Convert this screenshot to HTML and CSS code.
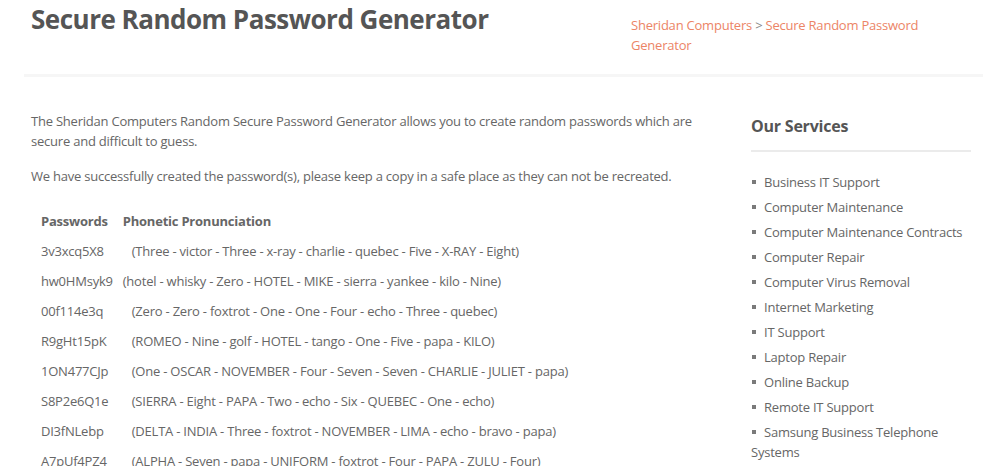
FILE: index.html
```html
<!DOCTYPE html>
<html lang="en">
<head>
<meta charset="utf-8">
<title>Secure Random Password Generator</title>
<link rel="stylesheet" href="styles.css">
</head>
<body>
<header class="page-head">
  <div class="title-wrap">
    <h1 class="page-title">Secure Random Password Generator</h1>
  </div>
  <nav class="crumbs">
    <a href="#" class="crumb">Sheridan Computers</a> <span class="sep">&gt;</span> <a href="#" class="crumb">Secure Random Password Generator</a>
  </nav>
</header>
<div class="main">
  <section class="content">
    <p>The Sheridan Computers Random Secure Password Generator allows you to create random passwords which are secure and difficult to guess.</p>
    <p>We have successfully created the password(s), please keep a copy in a safe place as they can not be recreated.</p>
    <table class="pw-table">
      <tr><th>Passwords</th><th>Phonetic Pronunciation</th></tr>
      <tr><td>3v3xcq5X8</td><td class="ph wide">(Three - victor - Three - x-ray - charlie - quebec - Five - X-RAY - Eight)</td></tr>
      <tr><td>hw0HMsyk9</td><td class="ph">(hotel - whisky - Zero - HOTEL - MIKE - sierra - yankee - kilo - Nine)</td></tr>
      <tr><td>00f114e3q</td><td class="ph wide">(Zero - Zero - foxtrot - One - One - Four - echo - Three - quebec)</td></tr>
      <tr><td>R9gHt15pK</td><td class="ph wide">(ROMEO - Nine - golf - HOTEL - tango - One - Five - papa - KILO)</td></tr>
      <tr><td>1ON477CJp</td><td class="ph wide">(One - OSCAR - NOVEMBER - Four - Seven - Seven - CHARLIE - JULIET - papa)</td></tr>
      <tr><td>S8P2e6Q1e</td><td class="ph wide">(SIERRA - Eight - PAPA - Two - echo - Six - QUEBEC - One - echo)</td></tr>
      <tr><td>DI3fNLebp</td><td class="ph wide">(DELTA - INDIA - Three - foxtrot - NOVEMBER - LIMA - echo - bravo - papa)</td></tr>
      <tr><td>A7pUf4PZ4</td><td class="ph wide">(ALPHA - Seven - papa - UNIFORM - foxtrot - Four - PAPA - ZULU - Four)</td></tr>
    </table>
  </section>
  <aside class="sidebar">
    <h3 class="side-title">Our Services</h3>
    <ul class="services">
      <li><span class="bullet"></span>Business IT Support</li>
      <li><span class="bullet"></span>Computer Maintenance</li>
      <li><span class="bullet"></span>Computer Maintenance Contracts</li>
      <li><span class="bullet"></span>Computer Repair</li>
      <li><span class="bullet"></span>Computer Virus Removal</li>
      <li><span class="bullet"></span>Internet Marketing</li>
      <li><span class="bullet"></span>IT Support</li>
      <li><span class="bullet"></span>Laptop Repair</li>
      <li><span class="bullet"></span>Online Backup</li>
      <li><span class="bullet"></span>Remote IT Support</li>
      <li><span class="bullet"></span>Samsung Business Telephone Systems</li>
    </ul>
  </aside>
</div>
</body>
</html>
```

FILE: styles.css
```css
html, body {
  margin: 0;
  padding: 0;
  background: #fff;
}
body {
  font-family: "Open Sans", "Liberation Sans", sans-serif;
  font-size: 13px;
  line-height: 20px;
  letter-spacing: -0.017em;
  color: #666;
}
.page-head {
  display: flex;
  align-items: flex-start;
  margin: 0 18px 0 24px;
  padding: 2px 0 19px 7px;
  border-bottom: 3px solid #f6f6f6;
}
.title-wrap {
  flex: 0 0 600px;
}
.page-title {
  margin: 0;
  font-size: 26px;
  line-height: 35px;
  font-weight: 700;
  letter-spacing: -0.5px;
  color: #555;
}
.crumbs {
  width: 300px;
  margin-top: 13px;
  color: #888;
}
.crumb {
  color: #ec8466;
  text-decoration: none;
}
.main {
  display: flex;
  align-items: flex-start;
  padding-left: 31px;
}
.content {
  flex: 0 0 670px;
  padding-top: 34px;
}
.content p {
  margin: 0 0 15px;
}
.pw-table {
  border-collapse: collapse;
  margin-top: 20px;
}
.pw-table th,
.pw-table td {
  padding: 5px 0 5px 10px;
  text-align: left;
  white-space: nowrap;
}
.pw-table th {
  font-weight: 700;
  color: #666;
}
.pw-table td.wide {
  padding-left: 19px;
}
.sidebar {
  margin-left: 50px;
  width: 220px;
  padding-top: 38px;
}
.side-title {
  margin: 0;
  font-size: 16px;
  line-height: 22px;
  font-weight: 700;
  color: #555;
  padding-bottom: 13px;
  border-bottom: 2px solid #ebebeb;
}
.services {
  list-style: none;
  margin: 20px 0 0;
  padding: 0;
}
.services li {
  margin-bottom: 5px;
}
.bullet {
  display: inline-block;
  width: 4px;
  height: 4px;
  background: #7a7a7a;
  margin: 0 8px 0 1px;
  vertical-align: 3px;
}
```
